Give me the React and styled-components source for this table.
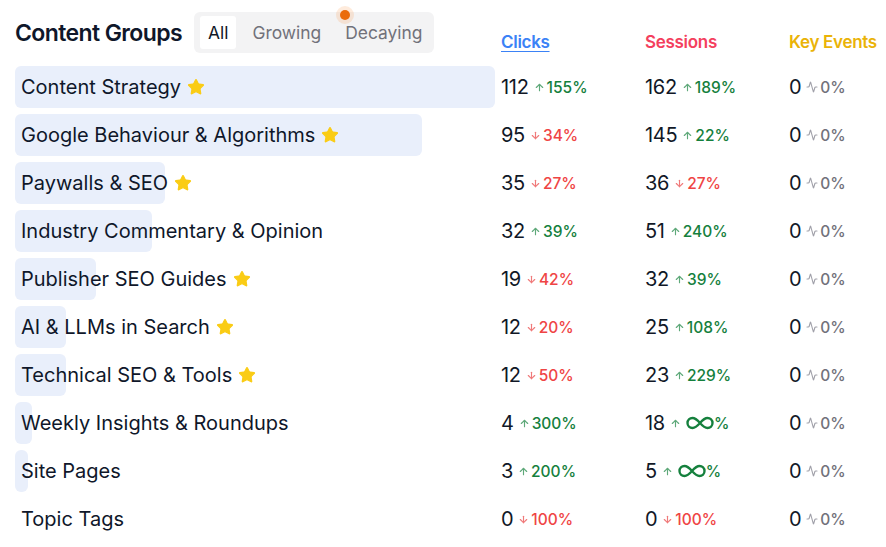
import React, { useState } from "react";
import styled, { createGlobalStyle } from "styled-components";
import { ArrowUp, ArrowDown, Activity, Star, Infinity as InfinityIcon } from "lucide-react";

const GlobalStyle = createGlobalStyle`
  html, body {
    margin: 0;
    padding: 0;
    background: #ffffff;
    font-family: Inter, "Noto Sans", "Liberation Sans", sans-serif;
    color: #0f172a;
  }
`;

const Page = styled.div`
  padding: 12px 0 0 15px;
  width: 886px;
  box-sizing: border-box;
`;

const Grid = styled.div`
  display: grid;
  grid-template-columns: 486px 144px 144px 1fr;
  align-items: center;
`;

const HeaderRow = styled(Grid)`
  height: 41px;
  margin-bottom: 10px;
`;

const TitleCell = styled.div`
  display: flex;
  align-items: center;
`;

const Title = styled.h1`
  margin: 0;
  font-size: 23px;
  font-weight: 600;
  letter-spacing: -0.6px;
  color: #0f172a;
`;

const Tabs = styled.div`
  display: flex;
  align-items: center;
  gap: 8px;
  margin-left: 12px;
  height: 41px;
  padding: 0 4px 0 6px;
  box-sizing: border-box;
  background: #f3f3f4;
  border-radius: 6px;
`;

const Tab = styled.button`
  position: relative;
  height: 33px;
  padding: 0 8px;
  border: none;
  border-radius: 3px;
  font-family: inherit;
  font-size: 17.4px;
  background: ${(p) => (p.$active ? "#ffffff" : "transparent")};
  color: ${(p) => (p.$active ? "#111827" : "#71717a")};
  cursor: pointer;
`;

const Dot = styled.span`
  position: absolute;
  left: 3px;
  top: -6px;
  width: 10px;
  height: 10px;
  border-radius: 50%;
  background: #ea6c0c;
  box-shadow: 0 0 0 4px rgba(251, 146, 60, 0.18);
`;

const ColHead = styled.div`
  align-self: end;
  margin-bottom: 1px;
  font-size: 17px;
  font-weight: 600;
  letter-spacing: -0.3px;
  color: ${(p) => p.$color};
  text-decoration: ${(p) => (p.$underline ? "underline" : "none")};
  text-underline-offset: 3px;
`;

const Row = styled(Grid)`
  height: 48px;
`;

const NameCell = styled.div`
  position: relative;
  height: 42px;
  display: flex;
  align-items: center;
  margin-right: 6px;
`;

const Bar = styled.div`
  position: absolute;
  left: 0;
  top: 0;
  bottom: 0;
  background: #e9effb;
  border-radius: 6px;
`;

const Name = styled.span`
  position: relative;
  display: flex;
  align-items: center;
  gap: 6px;
  padding-left: 6px;
  font-size: 20px;
  color: #0f172a;
  white-space: nowrap;
`;

const Metric = styled.div`
  display: flex;
  align-items: center;
  gap: 5px;
`;

const Value = styled.span`
  font-size: 20px;
  color: #111827;
  letter-spacing: -0.3px;
`;

const tones = {
  up: { text: "#15803d", icon: "#5fa97a" },
  down: { text: "#ef4444", icon: "#f07a7a" },
  flat: { text: "#71717a", icon: "#a1a1aa" },
};

const Delta = styled.span`
  display: flex;
  align-items: center;
  gap: 2px;
  font-size: 15.5px;
  font-weight: 500;
  color: ${(p) => tones[p.$tone].text};
  svg {
    color: ${(p) => tones[p.$tone].icon};
  }
`;

const Inf = styled.span`
  display: inline-flex;
  margin: 0 -3px 0 2px;
  svg {
    color: #15803d;
  }
`;

const rows = [
  { name: "Content Strategy", star: true, clicks: [112, 155], sessions: [162, 189] },
  { name: "Google Behaviour & Algorithms", star: true, clicks: [95, -34], sessions: [145, 22] },
  { name: "Paywalls & SEO", star: true, clicks: [35, -27], sessions: [36, -27] },
  { name: "Industry Commentary & Opinion", clicks: [32, 39], sessions: [51, 240] },
  { name: "Publisher SEO Guides", star: true, clicks: [19, -42], sessions: [32, 39] },
  { name: "AI & LLMs in Search", star: true, clicks: [12, -20], sessions: [25, 108] },
  { name: "Technical SEO & Tools", star: true, clicks: [12, -50], sessions: [23, 229] },
  { name: "Weekly Insights & Roundups", clicks: [4, 300], sessions: [18, "inf"] },
  { name: "Site Pages", clicks: [3, 200], sessions: [5, "inf"] },
  { name: "Topic Tags", clicks: [0, -100], sessions: [0, -100] },
];

const maxClicks = 112;

function Change({ pct }) {
  if (pct === "inf") {
    return (
      <Delta $tone="up">
        <ArrowUp size={11} strokeWidth={2.5} />
        <Inf>
          <InfinityIcon size={30} strokeWidth={1.9} />
        </Inf>
        %
      </Delta>
    );
  }
  if (pct === 0) {
    return (
      <Delta $tone="flat">
        <Activity size={12} strokeWidth={2.2} />
        0%
      </Delta>
    );
  }
  const up = pct > 0;
  return (
    <Delta $tone={up ? "up" : "down"}>
      {up ? <ArrowUp size={11} strokeWidth={2.5} /> : <ArrowDown size={11} strokeWidth={2.5} />}
      {Math.abs(pct)}%
    </Delta>
  );
}

export default function App() {
  const [tab, setTab] = useState("All");

  return (
    <Page>
      <GlobalStyle />
      <HeaderRow>
        <TitleCell>
          <Title>Content Groups</Title>
          <Tabs>
            {["All", "Growing", "Decaying"].map((t) => (
              <Tab key={t} $active={tab === t} onClick={() => setTab(t)}>
                {t === "Decaying" && <Dot />}
                {t}
              </Tab>
            ))}
          </Tabs>
        </TitleCell>
        <ColHead $color="#3b82f6" $underline>Clicks</ColHead>
        <ColHead $color="#f43f5e">Sessions</ColHead>
        <ColHead $color="#eab308">Key Events</ColHead>
      </HeaderRow>

      {rows.map((r) => (
        <Row key={r.name}>
          <NameCell>
            {r.clicks[0] > 0 && <Bar style={{ width: `${(r.clicks[0] / maxClicks) * 100}%` }} />}
            <Name>
              {r.name}
              {r.star && <Star size={18} fill="#facc15" color="#facc15" strokeWidth={1.5} />}
            </Name>
          </NameCell>
          <Metric>
            <Value>{r.clicks[0]}</Value>
            <Change pct={r.clicks[1]} />
          </Metric>
          <Metric>
            <Value>{r.sessions[0]}</Value>
            <Change pct={r.sessions[1]} />
          </Metric>
          <Metric>
            <Value>0</Value>
            <Change pct={0} />
          </Metric>
        </Row>
      ))}
    </Page>
  );
}
